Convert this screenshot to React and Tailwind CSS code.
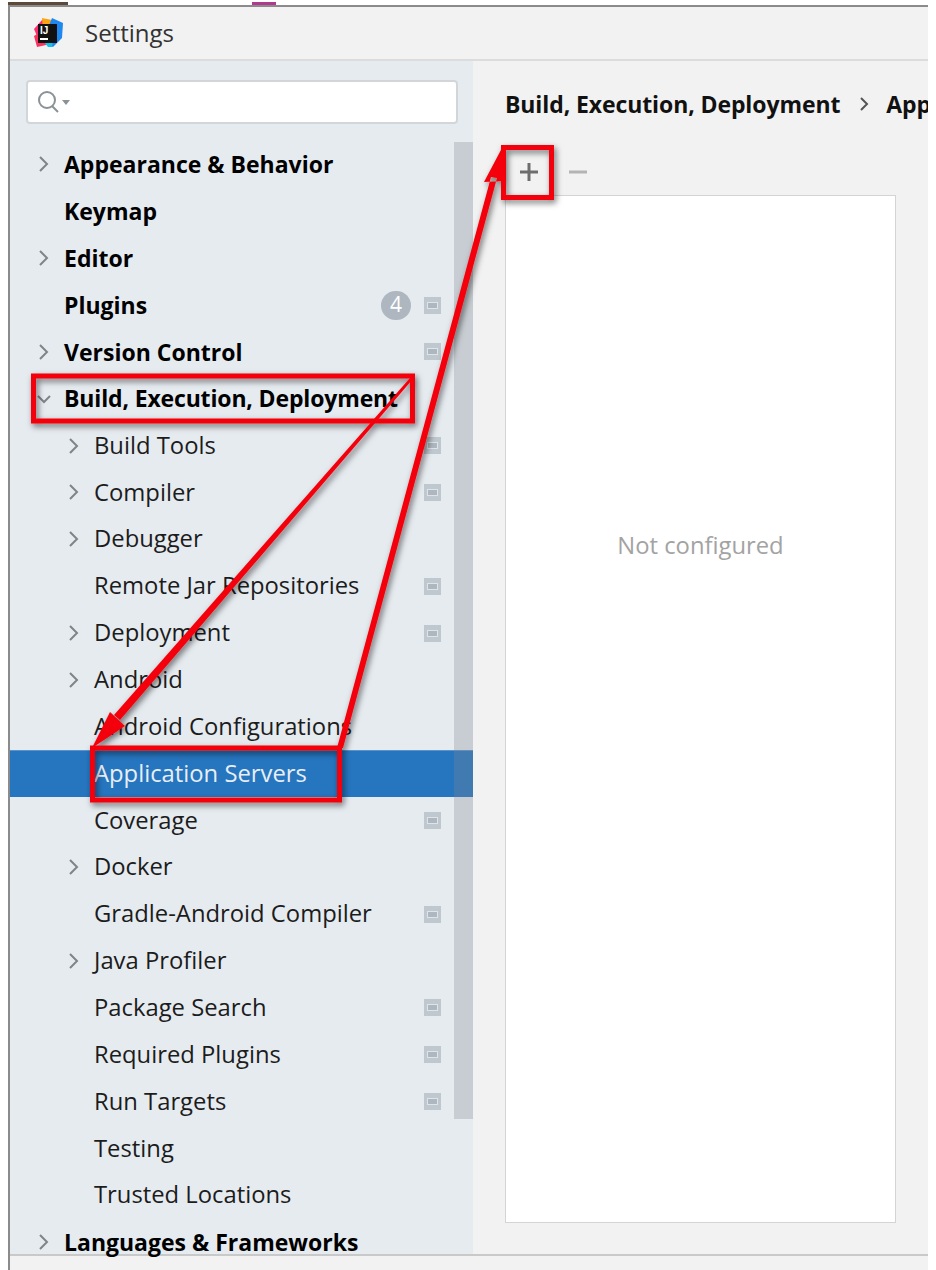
const rows = [
  { label: "Appearance & Behavior", bold: true, arrow: true },
  { label: "Keymap", bold: true },
  { label: "Editor", bold: true, arrow: true },
  { label: "Plugins", bold: true, badge: "4", page: true },
  { label: "Version Control", bold: true, arrow: true, page: true },
  { label: "Build, Execution, Deployment", bold: true, open: true, tight: true },
  { label: "Build Tools", arrow: true, page: true, child: true },
  { label: "Compiler", arrow: true, page: true, child: true },
  { label: "Debugger", arrow: true, child: true },
  { label: "Remote Jar Repositories", page: true, child: true },
  { label: "Deployment", arrow: true, page: true, child: true },
  { label: "Android", arrow: true, child: true },
  { label: "Android Configurations", child: true },
  { label: "Application Servers", child: true, selected: true },
  { label: "Coverage", page: true, child: true },
  { label: "Docker", arrow: true, child: true },
  { label: "Gradle-Android Compiler", page: true, child: true },
  { label: "Java Profiler", arrow: true, child: true },
  { label: "Package Search", page: true, child: true },
  { label: "Required Plugins", page: true, child: true },
  { label: "Run Targets", page: true, child: true },
  { label: "Testing", child: true },
  { label: "Trusted Locations", child: true },
  { label: "Languages & Frameworks", bold: true, arrow: true },
];

function Chevron({ open }) {
  return (
    <svg width="14" height="18" viewBox="0 0 14 18" fill="none" stroke="#7f8489" strokeWidth="2">
      {open ? <path d="M1 6l6 6 6-6" /> : <path d="M3 2l7 7-7 7" />}
    </svg>
  );
}

function PageIcon() {
  return (
    <span className="flex h-[17px] w-[17px] items-center justify-center bg-[#c0c8cf]">
      <span className="h-[7px] w-[11px] border border-[#dfe4e9] bg-[#aeb7bf]" />
    </span>
  );
}

function Row({ row }) {
  const text = row.bold
    ? `text-[23px] font-bold text-black ${row.tight ? "tracking-[-0.15px]" : ""}`
    : "text-[23.8px]";
  return (
    <div className={`relative flex h-[46.87px] items-center ${row.selected ? "border-t border-[#5a93cc] bg-[#2675bf] text-[#e8eef5]" : "text-[#1c1c1c]"} ${row.child ? "pl-[84px]" : "pl-[54px]"}`}>
      {(row.arrow || row.open) && (
        <span className={`absolute flex ${row.child ? "left-[57px]" : "left-[27px]"}`}>
          <Chevron open={row.open} />
        </span>
      )}
      <span className={`whitespace-nowrap ${text}`}>{row.label}</span>
      {row.badge && (
        <span className="absolute left-[371px] flex h-[29px] w-[30px] items-center justify-center rounded-full bg-[#aeb7bf] text-[21px] text-white">
          {row.badge}
        </span>
      )}
      {row.page && (
        <span className="absolute left-[414px] flex">
          <PageIcon />
        </span>
      )}
    </div>
  );
}

function Logo() {
  return (
    <svg width="32" height="32" viewBox="0 0 32 32">
      <path d="M1 12L9 3l9 1-3 14-11 1z" fill="#ff2d6f" />
      <path d="M9 1l10 2 3 8-12 1z" fill="#fca311" />
      <path d="M19 1l11 5-1 15-9 9-8-3 3-16z" fill="#1e88f0" />
      <path d="M1 19l10-6 2 15-9 2z" fill="#f9315f" />
      <path d="M12 26l8-3-1 7-4 0z" fill="#17c1e8" />
      <rect x="5" y="7" width="19" height="19" fill="#111" />
      <text x="7" y="17" fill="#fff" fontSize="10" fontWeight="700" fontFamily="Liberation Sans, sans-serif">IJ</text>
      <rect x="7" y="21" width="8" height="2" fill="#fff" />
    </svg>
  );
}

function Annotations() {
  return (
    <svg className="pointer-events-none absolute inset-0" width="936" height="1270" viewBox="0 0 936 1270" fill="none">
      <defs>
        <filter id="shade" x="-10%" y="-10%" width="120%" height="120%">
          <feDropShadow dx="2" dy="3" stdDeviation="3" floodColor="#000" floodOpacity="0.55" />
        </filter>
      </defs>
      <g filter="url(#shade)">
        <rect x="33.5" y="376" width="379" height="45" stroke="#f40009" strokeWidth="5" />
        <rect x="92.5" y="748" width="247" height="52" stroke="#f40009" strokeWidth="5" />
        <rect x="503.5" y="147.5" width="48" height="50" stroke="#f40009" strokeWidth="5" />
        <path d="M410 378l2 2L120 720l-6-5z M92 748l18-36 15 14z" fill="#f40009" />
        <path d="M337 748h6L497 178l-6-1z M502 148l1 33-19 1z" fill="#f40009" />
      </g>
    </svg>
  );
}

export default function App() {
  return (
    <div className="relative h-[1270px] w-[936px] overflow-hidden bg-white font-['Open_Sans','Noto_Sans',sans-serif]">
      <div className="w-[928px] overflow-hidden pl-[8px] pt-[5px]">
        <div className="flex h-[1265px] flex-col border-l-2 border-t-2 border-[#8b8b8b] bg-[#f2f2f2]">
          <div className="flex h-[54px] shrink-0 items-center gap-[20px] border-b-2 border-[#dcdcdc] pl-[23px]">
            <Logo />
            <span className="text-[24px] text-[#333]">Settings</span>
          </div>
          <div className="flex min-h-0 flex-1">
            <aside className="relative w-[463px] shrink-0 bg-[#e6ebf0]">
              <div className="ml-[16px] mt-[19px] flex h-[44px] w-[432px] items-center gap-[1px] rounded-[4px] border-2 border-[#d3d6d9] bg-white pl-[9px]">
                <svg width="24" height="26" viewBox="0 0 24 26" fill="none" stroke="#8a9296" strokeWidth="2">
                  <circle cx="10" cy="11" r="8" />
                  <path d="M15 17l6 6" />
                </svg>
                <svg width="8" height="5" viewBox="0 0 8 5"><path d="M0 0h8L4 5z" fill="#8a9296" /></svg>
              </div>
              <div className="pt-[17px]">
                {rows.map((row) => (
                  <Row key={row.label} row={row} />
                ))}
              </div>
              <div className="absolute left-[444px] top-[81px] h-[977px] w-[19px] bg-[#82878f]/30" />
            </aside>
            <main className="min-w-0 flex-1 overflow-hidden pl-[32px]">
              <div className="flex h-[85px] items-center whitespace-nowrap pt-[1px] text-[23px] font-bold tracking-[-0.1px] text-[#111]">
                <span>Build, Execution, Deployment</span>
                <svg width="10" height="16" viewBox="0 0 10 16" fill="none" stroke="#555" strokeWidth="2" className="ml-[19px] shrink-0"><path d="M2 2l6 6-6 6" /></svg>
                <span className="ml-[17px]">Application Servers</span>
              </div>
              <div className="flex h-[49px] items-center pl-[14px] pt-[3px]">
                <svg width="20" height="20" viewBox="0 0 20 20" fill="none" stroke="#6e6e6e" strokeWidth="3"><path d="M10 1v18M1 10h18" /></svg>
                <svg width="20" height="20" viewBox="0 0 20 20" fill="none" stroke="#b4b4b4" strokeWidth="3" className="ml-[29px]"><path d="M1 10h18" /></svg>
              </div>
              <div className="flex h-[1028px] w-[391px] justify-center border border-[#d4d4d4] bg-white pt-[330px]">
                <span className="text-[23.8px] leading-[38px] text-[#a3a3a3]">Not configured</span>
              </div>
            </main>
          </div>
          <div className="h-[16px] shrink-0 border-t-2 border-[#c9c9c9] bg-[#f2f2f2]" />
        </div>
      </div>
      <div className="absolute left-0 top-0 h-[5px] w-[936px] overflow-hidden">
        <div className="ml-[8px] mt-[2px] h-[3px] w-[60px] bg-[#5b4a3a]" />
        <div className="absolute left-[252px] top-[2px] h-[3px] w-[24px] bg-[#b03a8c]" />
      </div>
      <Annotations />
    </div>
  );
}
